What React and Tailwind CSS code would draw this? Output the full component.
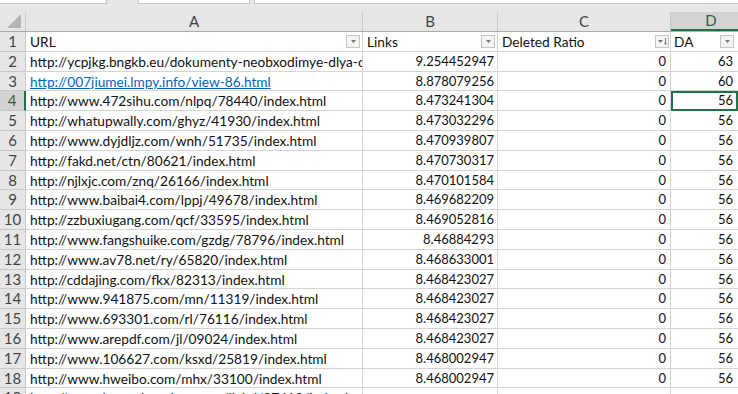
import React from 'react';

const rows = [
  ['http://ycpjkg.bngkb.eu/dokumenty-neobxodimye-dlya-oformleniya', '9.254452947', '0', '63'],
  ['http://007jiumei.lmpy.info/view-86.html', '8.878079256', '0', '60', true],
  ['http://www.472sihu.com/nlpq/78440/index.html', '8.473241304', '0', '56'],
  ['http://whatupwally.com/ghyz/41930/index.html', '8.473032296', '0', '56'],
  ['http://www.dyjdljz.com/wnh/51735/index.html', '8.470939807', '0', '56'],
  ['http://fakd.net/ctn/80621/index.html', '8.470730317', '0', '56'],
  ['http://njlxjc.com/znq/26166/index.html', '8.470101584', '0', '56'],
  ['http://www.baibai4.com/lppj/49678/index.html', '8.469682209', '0', '56'],
  ['http://zzbuxiugang.com/qcf/33595/index.html', '8.469052816', '0', '56'],
  ['http://www.fangshuike.com/gzdg/78796/index.html', '8.46884293', '0', '56'],
  ['http://www.av78.net/ry/65820/index.html', '8.468633001', '0', '56'],
  ['http://cddajing.com/fkx/82313/index.html', '8.468423027', '0', '56'],
  ['http://www.941875.com/mn/11319/index.html', '8.468423027', '0', '56'],
  ['http://www.693301.com/rl/76116/index.html', '8.468423027', '0', '56'],
  ['http://www.arepdf.com/jl/09024/index.html', '8.468423027', '0', '56'],
  ['http://www.106627.com/ksxd/25819/index.html', '8.468002947', '0', '56'],
  ['http://www.hweibo.com/mhx/33100/index.html', '8.468002947', '0', '56'],
  // last row is cut off by the window, only the tall letters peek in
  ['http://www.lvyoushenghuo.com/ljxhd/27413/index.html', '', '', ''],
];

const FilterButton = ({ sorted }) => (
  <span className="ml-auto flex h-[13px] w-[14px] shrink-0 items-center justify-center gap-[1px] border border-[#c6c6c6] bg-[#f3f3f3]">
    <svg width="5" height="3" viewBox="0 0 5 3">
      <path d="M0 0h5L2.5 3z" fill="#777" />
    </svg>
    {sorted && (
      <svg width="3" height="7" viewBox="0 0 3 7">
        <path d="M1.5 0v6M0.3 4.8L1.5 6.5 2.7 4.8" stroke="#777" strokeWidth="0.9" fill="none" />
      </svg>
    )}
  </span>
);

const Corner = () => (
  <div className="relative h-full w-[26px] shrink-0 border-r border-[#c8c8c8]">
    <svg className="absolute bottom-[3px] right-[4px]" width="14" height="14" viewBox="0 0 14 14">
      <path d="M14 0V14H0z" fill="#b5b5b5" />
    </svg>
  </div>
);

const App = () => {
  const font = { fontFamily: 'Lato, "Open Sans", sans-serif' };

  return (
    <div className="h-[394px] w-[738px] overflow-hidden bg-white text-[13.7px] text-[#111]" style={font}>
      {/* formula bar remains */}
      <div className="relative h-[12px] bg-[#e6e6e6]">
        <div className="absolute left-0 top-0 h-[4px] w-[107px] border-b border-r border-[#c6c6c6] bg-white" />
        <div className="absolute left-[138px] top-0 h-[4px] w-[112px] border-b border-l border-r border-[#c6c6c6] bg-white" />
        <div className="absolute left-[254px] top-0 h-[4px] w-[484px] border-b border-l border-[#c6c6c6] bg-white" />
      </div>

      {/* column headers */}
      <div className="flex h-[20px] border-b border-[#ababab] bg-[#e6e6e6] text-[15px] leading-[19px] text-[#444]">
        <Corner />
        <div className="w-[337px] shrink-0 border-r border-[#c8c8c8] text-center">A</div>
        <div className="w-[135px] shrink-0 border-r border-[#c8c8c8] text-center">B</div>
        <div className="w-[173px] shrink-0 border-r border-[#c8c8c8] text-center">C</div>
        <div className="w-[80px] shrink-0 border-b-2 border-[#217346] bg-[#d2d2d2] text-center leading-[17px] text-[#2f5b40]">D</div>
      </div>

      {/* header row 1 */}
      <div className="flex h-[19.8px] leading-[19px]">
        <div className="w-[26px] shrink-0 border-b border-r border-[#c8c8c8] bg-[#e6e6e6] text-center text-[15px] text-[#444]">1</div>
        <div className="flex w-[337px] shrink-0 items-center border-b border-r border-[#d4d4d4] pl-[4px] pr-[2px]">
          <span>URL</span>
          <FilterButton />
        </div>
        <div className="flex w-[135px] shrink-0 items-center border-b border-r border-[#d4d4d4] pl-[4px] pr-[2px]">
          <span>Links</span>
          <FilterButton />
        </div>
        <div className="flex w-[173px] shrink-0 items-center border-b border-r border-[#d4d4d4] pl-[4px] pr-[1px]">
          <span>Deleted Ratio</span>
          <FilterButton sorted />
        </div>
        <div className="flex w-[67px] shrink-0 items-center border-b border-[#d4d4d4] pl-[3px] pr-[4px]">
          <span>DA</span>
          <FilterButton />
        </div>
      </div>

      {rows.map(([url, links, ratio, da, link], i) => {
        const n = i + 2;
        const active = n === 4;
        return (
          <div key={n} className="flex h-[19.8px] leading-[19px]">
            <div
              className={
                active
                  ? 'w-[26px] shrink-0 border-b border-r-2 border-b-[#c8c8c8] border-r-[#217346] bg-[#d2d2d2] text-center text-[15px] text-[#2f5b40]'
                  : 'w-[26px] shrink-0 border-b border-r border-[#c8c8c8] bg-[#e6e6e6] text-center text-[15px] text-[#444]'
              }
            >
              {n}
            </div>
            <div className="w-[337px] shrink-0 overflow-hidden whitespace-nowrap border-b border-r border-[#d4d4d4] pl-[4px]">
              {link ? <span className="text-[#0563c1] underline">{url}</span> : url}
            </div>
            <div className="w-[135px] shrink-0 border-b border-r border-[#d4d4d4] pr-[3px] text-right text-[13px]">{links}</div>
            <div className="w-[173px] shrink-0 border-b border-r border-[#d4d4d4] pr-[4px] text-right text-[13px]">{ratio}</div>
            <div
              className={
                active
                  ? 'w-[67px] shrink-0 border-2 border-[#217346] pr-[3px] text-right text-[13px] leading-[15.8px]'
                  : 'w-[67px] shrink-0 border-b border-[#d4d4d4] pr-[5px] text-right text-[13px]'
              }
            >
              {da}
            </div>
          </div>
        );
      })}
    </div>
  );
};

export default App;
